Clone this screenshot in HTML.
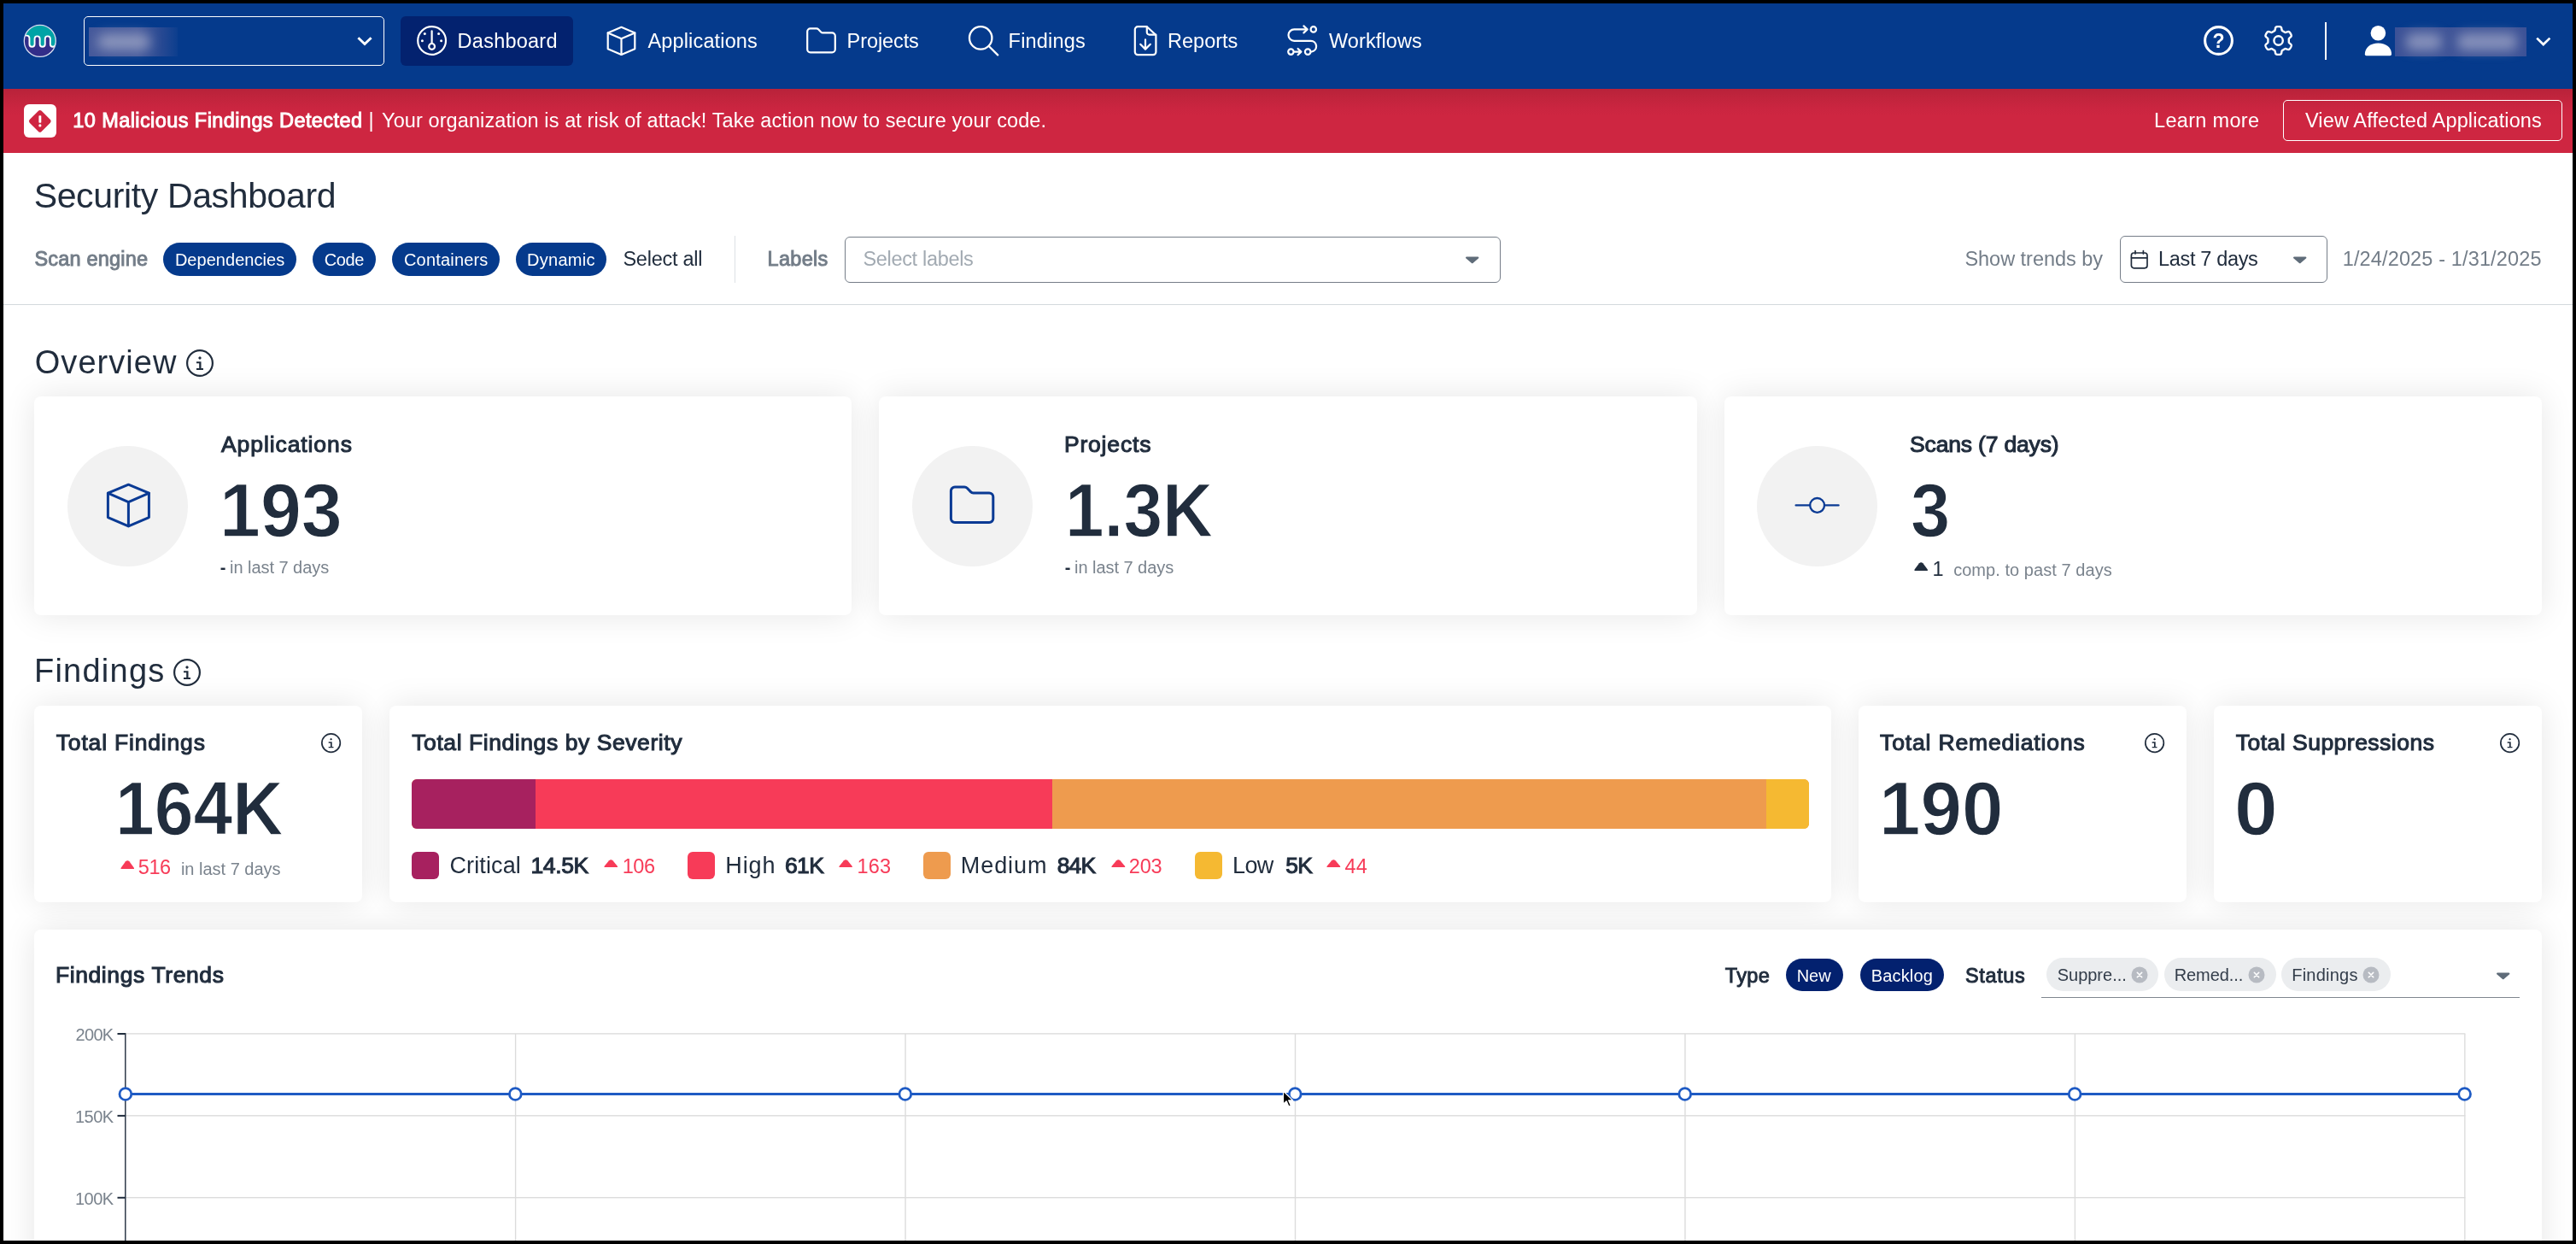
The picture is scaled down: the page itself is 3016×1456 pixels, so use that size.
<!DOCTYPE html>
<html lang="en"><head><meta charset="utf-8"><title>Security Dashboard</title>
<style>
html,body{margin:0;padding:0;background:#000;}
body{width:3016px;height:1456px;overflow:hidden;position:relative;font-family:"Liberation Sans",sans-serif;color:#212d3d;}
#app{position:absolute;left:4px;top:4px;width:3008px;height:1448px;background:#fff;overflow:hidden;}
#w{position:absolute;left:-4px;top:-4px;width:3016px;height:1456px;will-change:transform;}
.t{position:absolute;white-space:nowrap;}
.card{background:#fff;border-radius:8px;box-shadow:0 0 38px rgba(0,0,0,0.10);}
.w{color:#fff;}
</style></head><body><div id="app"><div id="w">
<div class="" style="position:absolute;left:4px;top:4px;width:3008px;height:100px;background:#053a8c;"></div>
<svg style="position:absolute;left:27px;top:28px;" width="40" height="40" viewBox="0 0 40 40">
<defs><clipPath id="lg"><circle cx="19.8" cy="19.9" r="18.4"/></clipPath></defs>
<circle cx="19.8" cy="19.9" r="18.4" fill="#322d89"/>
<g clip-path="url(#lg)">
<path d="M0 13.6 H4.4 a3.05 3.05 0 0 1 3.05 3.05 V23.65 a3.05 3.05 0 0 0 6.1 0 V17.45 a3.05 3.05 0 0 1 6.1 0 V23.65 a3.05 3.05 0 0 0 6.1 0 V17.45 a3.05 3.05 0 0 1 6.1 0 V23.65 a3.05 3.05 0 0 0 6.1 0 H40 V0 H0Z" fill="#00a3a6"/>
<path d="M0 13.6 H4.4 a3.05 3.05 0 0 1 3.05 3.05 V23.65 a3.05 3.05 0 0 0 6.1 0 V17.45 a3.05 3.05 0 0 1 6.1 0 V23.65 a3.05 3.05 0 0 0 6.1 0 V17.45 a3.05 3.05 0 0 1 6.1 0 V23.65 a3.05 3.05 0 0 0 6.1 0 H40" fill="none" stroke="#fff" stroke-width="1.9"/>
</g>
<circle cx="19.8" cy="19.9" r="18.5" fill="none" stroke="#d9def0" stroke-width="1.3"/>
</svg>
<div class="" style="position:absolute;left:98px;top:19px;width:352px;height:58px;box-sizing:border-box;border:1px solid #fff;border-radius:5px;"></div>
<div class="" style="position:absolute;left:104px;top:32px;width:104px;height:34px;background:linear-gradient(90deg,#45599b,#4a5d9d 55%,#2a4a93 80%,#0c3e8e);"></div>
<div class="" style="position:absolute;left:114px;top:40px;width:62px;height:18px;background:#8d97bd;filter:blur(7px);border-radius:9px;"></div>
<svg style="position:absolute;left:416px;top:40px;" width="22" height="16" viewBox="0 0 22 16"><path d="M3.4 4.2 L11 11.6 L18.6 4.2" fill="none" stroke="#fff" stroke-width="2.9" stroke-linejoin="miter"/></svg>
<div class="" style="position:absolute;left:469px;top:19px;width:202px;height:58px;background:#03226f;border-radius:6px;"></div>
<svg style="position:absolute;left:486px;top:28px;" width="40" height="40" viewBox="0 0 40 40"><g fill="none" stroke="#fff" stroke-width="2.2" stroke-linecap="round">
<circle cx="19.6" cy="19.5" r="16.4"/><path d="M19.6 8.4V22.6"/><circle cx="19.6" cy="26.4" r="3.4"/></g>
<g fill="#fff"><circle cx="11.3" cy="11.4" r="1.5"/><circle cx="27.6" cy="11.4" r="1.5"/><circle cx="8.4" cy="19.8" r="1.5"/><circle cx="30.6" cy="19.8" r="1.5"/></g></svg>
<div class="t " style="left:535.62px;top:35px;font-size:23.5px;line-height:26px;letter-spacing:0.242px;color:#fff;">Dashboard</div>
<svg style="position:absolute;left:708px;top:28px;" width="40" height="40" viewBox="0 0 40 40"><g fill="none" stroke="#fff" stroke-width="2.2" stroke-linejoin="round" stroke-linecap="round">
<path d="M19.5 3.8 L35.3 10.4 V29.2 L19.5 35.9 L3.7 29.2 V10.4 Z"/><path d="M3.7 10.4 L19.5 17.2 L35.3 10.4 M19.5 17.2 V35.9"/></g></svg>
<div class="t " style="left:758.50px;top:35px;font-size:23.5px;line-height:26px;letter-spacing:0.145px;color:#fff;">Applications</div>
<svg style="position:absolute;left:942px;top:28px;" width="40" height="40" viewBox="0 0 40 40"><path d="M3.2 9 a3.6 3.6 0 0 1 3.6 -3.6 h7.2 a3 3 0 0 1 2.1 .9 l3.1 3.2 a3 3 0 0 0 2.1 .9 h10.9 a3.6 3.6 0 0 1 3.6 3.6 v15.8 a3.6 3.6 0 0 1 -3.6 3.6 h-25.4 a3.6 3.6 0 0 1 -3.6 -3.6 Z" fill="none" stroke="#fff" stroke-width="2.2" stroke-linejoin="round"/></svg>
<div class="t " style="left:991.62px;top:35px;font-size:23.5px;line-height:26px;letter-spacing:-0.099px;color:#fff;">Projects</div>
<svg style="position:absolute;left:1132px;top:28px;" width="40" height="40" viewBox="0 0 40 40"><g fill="none" stroke="#fff" stroke-width="2.3" stroke-linecap="round"><circle cx="16.2" cy="16.4" r="13.2"/><path d="M26 26.2 L36.2 36.4"/></g></svg>
<div class="t " style="left:1180.62px;top:35px;font-size:23.5px;line-height:26px;letter-spacing:0.196px;color:#fff;">Findings</div>
<svg style="position:absolute;left:1324px;top:28px;" width="36" height="40" viewBox="0 0 36 40"><g fill="none" stroke="#fff" stroke-width="2.2" stroke-linejoin="round" stroke-linecap="round">
<path d="M8.2 3.2 h10.6 L29.4 13 v19.8 a3.4 3.4 0 0 1 -3.4 3.4 h-17.8 a3.4 3.4 0 0 1 -3.4 -3.4 v-26.2 a3.4 3.4 0 0 1 3.4 -3.4 Z"/>
<path d="M18.8 3.4 v6.4 a2.8 2.8 0 0 0 2.8 2.8 h7.6"/>
<path d="M17 18.4 V29.4 M11.2 23.8 L17 29.6 L22.8 23.8"/></g></svg>
<div class="t " style="left:1367.12px;top:35px;font-size:23.5px;line-height:26px;letter-spacing:-0.018px;color:#fff;">Reports</div>
<svg style="position:absolute;left:1505px;top:28px;" width="40" height="40" viewBox="0 0 40 40"><g fill="none" stroke="#fff" stroke-width="2.2" stroke-linecap="round" stroke-linejoin="round">
<circle cx="32.8" cy="6.4" r="3.2"/>
<path d="M25.2 6.4 H10.2 a6.7 6.7 0 0 0 0 13.4 H29.8 a6.4 6.4 0 0 1 1 12.7"/>
<path d="M21.4 2.4 L25.6 6.4 L21.4 10.4"/>
<circle cx="26.2" cy="32.6" r="3.3"/>
<circle cx="6.4" cy="32.6" r="3.2"/>
<path d="M10.6 32.6 H18 M14.6 29 L18.4 32.6 L14.6 36.2"/></g></svg>
<div class="t " style="left:1555.94px;top:35px;font-size:23.5px;line-height:26px;letter-spacing:0.120px;color:#fff;">Workflows</div>
<svg style="position:absolute;left:2578px;top:28px;" width="40" height="40" viewBox="0 0 40 40"><circle cx="19.5" cy="19.5" r="15.9" fill="none" stroke="#fff" stroke-width="3.1"/>
<text x="19.5" y="28.2" text-anchor="middle" font-family="Liberation Sans, sans-serif" font-weight="700" font-size="23" fill="#fff">?</text></svg>
<svg style="position:absolute;left:2648px;top:28px;" width="40" height="40" viewBox="0 0 40 40"><g fill="none" stroke="#fff" stroke-width="2.4" stroke-linejoin="round"><path d="M31.80 19.50 L31.80 19.82 L31.79 20.14 L31.78 20.46 L31.77 20.78 L31.78 21.10 L31.82 21.43 L31.93 21.79 L32.20 22.18 L32.71 22.65 L33.41 23.20 L34.10 23.79 L34.54 24.36 L34.74 24.86 L34.75 25.32 L34.68 25.74 L34.55 26.15 L34.39 26.55 L34.21 26.94 L34.01 27.32 L33.80 27.70 L33.58 28.07 L33.35 28.43 L33.10 28.78 L32.84 29.12 L32.55 29.43 L32.21 29.72 L31.81 29.93 L31.28 30.01 L30.57 29.91 L29.71 29.61 L28.88 29.28 L28.22 29.08 L27.75 29.04 L27.38 29.11 L27.08 29.24 L26.79 29.40 L26.52 29.57 L26.25 29.74 L25.98 29.90 L25.70 30.07 L25.42 30.22 L25.14 30.38 L24.86 30.53 L24.58 30.68 L24.30 30.85 L24.03 31.05 L23.79 31.32 L23.58 31.76 L23.43 32.43 L23.30 33.31 L23.13 34.20 L22.87 34.87 L22.53 35.29 L22.14 35.53 L21.73 35.68 L21.31 35.77 L20.89 35.83 L20.46 35.87 L20.03 35.89 L19.60 35.90 L19.17 35.89 L18.74 35.87 L18.31 35.83 L17.89 35.77 L17.47 35.68 L17.06 35.53 L16.67 35.29 L16.33 34.87 L16.07 34.20 L15.90 33.31 L15.77 32.43 L15.62 31.76 L15.41 31.32 L15.17 31.05 L14.90 30.85 L14.62 30.68 L14.34 30.53 L14.06 30.38 L13.78 30.22 L13.50 30.07 L13.22 29.90 L12.95 29.74 L12.68 29.57 L12.41 29.40 L12.12 29.24 L11.82 29.11 L11.45 29.04 L10.98 29.08 L10.32 29.28 L9.49 29.61 L8.63 29.91 L7.92 30.01 L7.39 29.93 L6.99 29.72 L6.65 29.43 L6.36 29.12 L6.10 28.78 L5.85 28.43 L5.62 28.07 L5.40 27.70 L5.19 27.32 L4.99 26.94 L4.81 26.55 L4.65 26.15 L4.52 25.74 L4.45 25.32 L4.46 24.86 L4.66 24.36 L5.10 23.79 L5.79 23.20 L6.49 22.65 L7.00 22.18 L7.27 21.79 L7.38 21.43 L7.42 21.10 L7.43 20.78 L7.42 20.46 L7.41 20.14 L7.40 19.82 L7.40 19.50 L7.40 19.18 L7.41 18.86 L7.42 18.54 L7.43 18.22 L7.42 17.90 L7.38 17.57 L7.27 17.21 L7.00 16.82 L6.49 16.35 L5.79 15.80 L5.10 15.21 L4.66 14.64 L4.46 14.14 L4.45 13.68 L4.52 13.26 L4.65 12.85 L4.81 12.45 L4.99 12.06 L5.19 11.68 L5.40 11.30 L5.62 10.93 L5.85 10.57 L6.10 10.22 L6.36 9.88 L6.65 9.57 L6.99 9.28 L7.39 9.07 L7.92 8.99 L8.63 9.09 L9.49 9.39 L10.32 9.72 L10.98 9.92 L11.45 9.96 L11.82 9.89 L12.12 9.76 L12.41 9.60 L12.68 9.43 L12.95 9.26 L13.22 9.10 L13.50 8.93 L13.78 8.78 L14.06 8.62 L14.34 8.47 L14.62 8.32 L14.90 8.15 L15.17 7.95 L15.41 7.68 L15.62 7.24 L15.77 6.57 L15.90 5.69 L16.07 4.80 L16.33 4.13 L16.67 3.71 L17.06 3.47 L17.47 3.32 L17.89 3.23 L18.31 3.17 L18.74 3.13 L19.17 3.11 L19.60 3.10 L20.03 3.11 L20.46 3.13 L20.89 3.17 L21.31 3.23 L21.73 3.32 L22.14 3.47 L22.53 3.71 L22.87 4.13 L23.13 4.80 L23.30 5.69 L23.43 6.57 L23.58 7.24 L23.79 7.68 L24.03 7.95 L24.30 8.15 L24.58 8.32 L24.86 8.47 L25.14 8.62 L25.42 8.78 L25.70 8.93 L25.98 9.10 L26.25 9.26 L26.52 9.43 L26.79 9.60 L27.08 9.76 L27.38 9.89 L27.75 9.96 L28.22 9.92 L28.88 9.72 L29.71 9.39 L30.57 9.09 L31.28 8.99 L31.81 9.07 L32.21 9.28 L32.55 9.57 L32.84 9.88 L33.10 10.22 L33.35 10.57 L33.58 10.93 L33.80 11.30 L34.01 11.68 L34.21 12.06 L34.39 12.45 L34.55 12.85 L34.68 13.26 L34.75 13.68 L34.74 14.14 L34.54 14.64 L34.10 15.21 L33.41 15.80 L32.71 16.35 L32.20 16.82 L31.93 17.21 L31.82 17.57 L31.78 17.90 L31.77 18.22 L31.78 18.54 L31.79 18.86 L31.80 19.18Z"/><circle cx="19.6" cy="19.5" r="5.2"/></g></svg>
<div class="" style="position:absolute;left:2722px;top:26px;width:2.400000000000091px;height:44px;background:#fff;"></div>
<svg style="position:absolute;left:2766px;top:28px;" width="36" height="40" viewBox="0 0 36 40"><circle cx="18.4" cy="10.8" r="8.8" fill="#fff"/><path d="M2.8 35.4 C2.8 27.5 9.5 22.4 18.4 22.4 S34 27.5 34 35.4 a1.8 1.8 0 0 1 -1.8 1.8 H4.6 a1.8 1.8 0 0 1 -1.8 -1.8Z" fill="#fff"/></svg>
<div class="" style="position:absolute;left:2804px;top:32px;width:154px;height:34px;background:linear-gradient(90deg,#3b5197,#405598 10%,#405598 90%,#3b5197);"></div>
<div class="" style="position:absolute;left:2817px;top:39px;width:42px;height:20px;background:#8590ba;filter:blur(6.5px);border-radius:9px;"></div>
<div class="" style="position:absolute;left:2877px;top:39px;width:70px;height:20px;background:#8590ba;filter:blur(6.5px);border-radius:9px;"></div>
<svg style="position:absolute;left:2966px;top:40px;" width="24" height="16" viewBox="0 0 24 16"><path d="M4.2 4.6 L11.8 12 L19.4 4.6" fill="none" stroke="#fff" stroke-width="2.7" stroke-linejoin="miter"/></svg>
<div class="" style="position:absolute;left:4px;top:104px;width:3008px;height:74.5px;background:linear-gradient(180deg,#b8223a 0,#c0243c 9px,#ca2540 22px,#ce2641 32px,#ce2641 100%);"></div>
<div class="" style="position:absolute;left:28px;top:122px;width:38px;height:39px;background:#fff;border-radius:6px;"></div>
<svg style="position:absolute;left:28px;top:122px;" width="38" height="39" viewBox="0 0 38 39"><path d="M17 7.8 a2.6 2.6 0 0 1 3.6 0 l10.3 10.3 a2.6 2.6 0 0 1 0 3.6 l-10.3 10.3 a2.6 2.6 0 0 1 -3.6 0 l-10.3 -10.3 a2.6 2.6 0 0 1 0 -3.6Z" fill="#cf2541"/>
<rect x="17.4" y="13.2" width="2.9" height="8.6" rx=".8" fill="#fff"/><circle cx="18.85" cy="24.9" r="1.6" fill="#fff"/></svg>
<div class="t " style="left:85.24px;top:128px;font-size:23.5px;line-height:26px;letter-spacing:0.421px;-webkit-text-stroke:0.94px #fff;color:#fff;">10 Malicious Findings Detected</div>
<div class="t " style="left:431.44px;top:128px;font-size:23.5px;line-height:26px;color:#fff;">|</div>
<div class="t " style="left:447.03px;top:128px;font-size:23.5px;line-height:26px;letter-spacing:0.098px;color:#fff;">Your organization is at risk of attack! Take action now to secure your code.</div>
<div class="t " style="left:2522.12px;top:128px;font-size:23.5px;line-height:26px;letter-spacing:0.304px;color:#fff;">Learn more</div>
<div class="" style="position:absolute;left:2673px;top:117px;width:327px;height:48px;box-sizing:border-box;border:1px solid #fff;border-radius:5px;"></div>
<div class="t " style="left:2698.94px;top:128px;font-size:23.5px;line-height:26px;letter-spacing:0.136px;color:#fff;">View Affected Applications</div>
<div class="t " style="left:39.66px;top:206px;font-size:41px;line-height:46px;letter-spacing:-0.363px;">Security Dashboard</div>
<div class="t " style="left:40.44px;top:290px;font-size:23.5px;line-height:26px;letter-spacing:0.190px;-webkit-text-stroke:0.94px #737d88;color:#737d88;">Scan engine</div>
<div class="" style="position:absolute;left:191px;top:284px;width:156px;height:39px;background:#053a8c;border-radius:19.5px;"></div>
<div class="t " style="left:204.90px;top:293px;font-size:20px;line-height:22px;letter-spacing:0.036px;color:#fff;">Dependencies</div>
<div class="" style="position:absolute;left:366px;top:284px;width:74px;height:39px;background:#053a8c;border-radius:19.5px;"></div>
<div class="t " style="left:379.80px;top:293px;font-size:20px;line-height:22px;letter-spacing:-0.383px;color:#fff;">Code</div>
<div class="" style="position:absolute;left:459px;top:284px;width:126px;height:39px;background:#053a8c;border-radius:19.5px;"></div>
<div class="t " style="left:473.00px;top:293px;font-size:20px;line-height:22px;letter-spacing:0.178px;color:#fff;">Containers</div>
<div class="" style="position:absolute;left:604px;top:284px;width:106px;height:39px;background:#053a8c;border-radius:19.5px;"></div>
<div class="t " style="left:617.00px;top:293px;font-size:20px;line-height:22px;letter-spacing:0.283px;color:#fff;">Dynamic</div>
<div class="t " style="left:729.44px;top:290px;font-size:23.5px;line-height:26px;letter-spacing:-0.252px;">Select all</div>
<div class="" style="position:absolute;left:860px;top:276px;width:1.2000000000000455px;height:55px;background:#dde1e5;"></div>
<div class="t " style="left:898.62px;top:290px;font-size:23.5px;line-height:26px;letter-spacing:0.287px;-webkit-text-stroke:0.94px #737d88;color:#737d88;">Labels</div>
<div class="" style="position:absolute;left:989px;top:277px;width:768px;height:54px;box-sizing:border-box;border:1px solid #757d88;border-radius:6px;"></div>
<div class="t " style="left:1010.44px;top:290px;font-size:23.5px;line-height:26px;letter-spacing:-0.322px;color:#a2aab2;">Select labels</div>
<svg style="position:absolute;left:1715px;top:299px;" width="18" height="11" viewBox="0 0 18 11"><path d="M2 1.6 H15.4 a1 1 0 0 1 .75 1.65 L9.5 8.9 a1 1 0 0 1 -1.5 0 L1.25 3.25 A1 1 0 0 1 2 1.6Z" fill="#5f6c79"/></svg>
<div class="t " style="left:2300.44px;top:290px;font-size:23.5px;line-height:26px;letter-spacing:-0.032px;color:#737d88;">Show trends by</div>
<div class="" style="position:absolute;left:2482px;top:276px;width:243px;height:55px;box-sizing:border-box;border:1px solid #757d88;border-radius:6px;"></div>
<svg style="position:absolute;left:2493px;top:292px;" width="24" height="24" viewBox="0 0 24 24"><g fill="none" stroke="#212d3d" stroke-width="1.7" stroke-linecap="round" stroke-linejoin="round">
<rect x="2.4" y="4" width="18.6" height="17.8" rx="3"/><path d="M2.6 9.8 H20.8 M7 1.6 V5 M16.4 1.6 V5"/></g></svg>
<div class="t " style="left:2527.12px;top:290px;font-size:23.5px;line-height:26px;letter-spacing:-0.350px;">Last 7 days</div>
<svg style="position:absolute;left:2684px;top:299px;" width="18" height="11" viewBox="0 0 18 11"><path d="M2 1.6 H15.4 a1 1 0 0 1 .75 1.65 L9.5 8.9 a1 1 0 0 1 -1.5 0 L1.25 3.25 A1 1 0 0 1 2 1.6Z" fill="#5f6c79"/></svg>
<div class="t " style="left:2742.74px;top:290px;font-size:23.5px;line-height:26px;letter-spacing:0.138px;color:#737d88;">1/24/2025 - 1/31/2025</div>
<div class="" style="position:absolute;left:4px;top:355.5px;width:3008px;height:1.6999999999999886px;background:#d3d9dd;"></div>
<div class="t " style="left:40.79px;top:403px;font-size:38px;line-height:42px;letter-spacing:1.036px;">Overview</div>
<svg style="position:absolute;left:217px;top:408px;" width="34" height="34" viewBox="0 0 34 34"><circle cx="17" cy="17" r="14.9" fill="none" stroke="#212d3d" stroke-width="2.2"/><g fill="#212d3d" transform="translate(17 17) scale(1.0)"><path d="M0 -8.1 L2 -6.1 L0 -4.1 L-2 -6.1Z"/><path d="M-4 -1.7 H1.5 V6 H4 V7.9 H-4 V6 H-0.8 V0.2 H-4Z"/></g></svg>
<div class="card" style="position:absolute;left:40px;top:464px;width:957px;height:256px;"></div>
<div class="" style="position:absolute;left:79.0px;top:521.5px;width:141.0px;height:141.0px;background:#f2f2f2;border-radius:50%;"></div>
<svg style="position:absolute;left:119.5px;top:562px;" width="60" height="60" viewBox="0 0 60 60"><g fill="none" stroke="#0a3a94" stroke-width="3" stroke-linejoin="round" stroke-linecap="round">
<path d="M30.4 5.2 L54.4 15.2 V43.6 L30.4 53.8 L6.4 43.6 V15.2 Z"/><path d="M6.4 15.2 L30.4 25.6 L54.4 15.2 M30.4 25.6 V53.8"/></g></svg>
<div class="t " style="left:259.00px;top:505px;font-size:26.5px;line-height:30px;letter-spacing:0.911px;-webkit-text-stroke:1.06px #212d3d;">Applications</div>
<div class="t " style="left:257.11px;top:552px;font-size:84px;line-height:94px;font-weight:700;-webkit-text-stroke:1.2px #fff;transform:scale(1.0258,1.0680);transform-origin:0 76px;">193</div>
<div class="t " style="left:257.65px;top:653px;font-size:20px;line-height:22px;font-weight:700;">-</div>
<div class="t " style="left:269.00px;top:653px;font-size:20px;line-height:22px;letter-spacing:-0.042px;color:#7a838d;">in last 7 days</div>
<div class="card" style="position:absolute;left:1029.3px;top:464px;width:957.5px;height:256px;"></div>
<div class="" style="position:absolute;left:1067.8999999999999px;top:521.5px;width:141.0px;height:141.0px;background:#f2f2f2;border-radius:50%;"></div>
<svg style="position:absolute;left:1108.3999999999999px;top:562px;" width="60" height="60" viewBox="0 0 60 60"><path d="M5.4 12.6 a4.6 4.6 0 0 1 4.6 -4.6 h11.2 a4.4 4.4 0 0 1 3.1 1.3 l4.2 4.3 a4.4 4.4 0 0 0 3.1 1.3 h18.6 a4.6 4.6 0 0 1 4.6 4.6 v25.4 a4.6 4.6 0 0 1 -4.6 4.6 h-40.2 a4.6 4.6 0 0 1 -4.6 -4.6 Z" fill="none" stroke="#0a3a94" stroke-width="3" stroke-linejoin="round"/></svg>
<div class="t " style="left:1245.88px;top:505px;font-size:26.5px;line-height:30px;letter-spacing:0.831px;-webkit-text-stroke:1.06px #212d3d;">Projects</div>
<div class="t " style="left:1246.87px;top:552px;font-size:84px;line-height:94px;font-weight:700;-webkit-text-stroke:1.2px #fff;transform:scale(0.9763,1.0680);transform-origin:0 76px;">1.3K</div>
<div class="t " style="left:1246.65px;top:653px;font-size:20px;line-height:22px;font-weight:700;">-</div>
<div class="t " style="left:1258.00px;top:653px;font-size:20px;line-height:22px;letter-spacing:-0.042px;color:#7a838d;">in last 7 days</div>
<div class="card" style="position:absolute;left:2019px;top:464px;width:957px;height:256px;"></div>
<div class="" style="position:absolute;left:2057.0px;top:521.5px;width:141.0px;height:141.0px;background:#f2f2f2;border-radius:50%;"></div>
<svg style="position:absolute;left:2097.5px;top:562px;" width="60" height="60" viewBox="0 0 60 60"><g fill="none" stroke="#0a3a94" stroke-width="2.3" stroke-linecap="round"><circle cx="29.6" cy="29.4" r="8.4"/><path d="M4.6 29.4 H21 M38.2 29.4 H54.6"/></g></svg>
<div class="t " style="left:2236.11px;top:505px;font-size:26.5px;line-height:30px;letter-spacing:-0.175px;-webkit-text-stroke:1.06px #212d3d;">Scans (7 days)</div>
<div class="t " style="left:2237.13px;top:552px;font-size:84px;line-height:94px;font-weight:700;-webkit-text-stroke:1.2px #fff;transform:scale(0.9881,1.0680);transform-origin:0 76px;">3</div>
<svg style="position:absolute;left:2241px;top:657.5px;" width="16.40000000000009" height="10.200000000000045" viewBox="0 0 16.40000000000009 10.200000000000045"><path d="M6.000000000000045 1.2 Q8.200000000000045 -0.9 10.400000000000045 1.2 L15.800000000000091 8.600000000000046 Q16.40000000000009 10.200000000000045 14.800000000000091 10.200000000000045 H1.6 Q0 10.200000000000045 0.6 8.600000000000046Z" fill="#212d3d"/></svg>
<div class="t " style="left:2262.44px;top:653px;font-size:23.5px;line-height:26px;">1</div>
<div class="t " style="left:2287.15px;top:656px;font-size:20px;line-height:22px;letter-spacing:0.053px;color:#7a838d;">comp. to past 7 days</div>
<div class="t " style="left:39.96px;top:764px;font-size:38px;line-height:42px;letter-spacing:1.247px;">Findings</div>
<svg style="position:absolute;left:202px;top:770px;" width="34" height="34" viewBox="0 0 34 34"><circle cx="17" cy="17" r="14.9" fill="none" stroke="#212d3d" stroke-width="2.2"/><g fill="#212d3d" transform="translate(17 17) scale(1.0)"><path d="M0 -8.1 L2 -6.1 L0 -4.1 L-2 -6.1Z"/><path d="M-4 -1.7 H1.5 V6 H4 V7.9 H-4 V6 H-0.8 V0.2 H-4Z"/></g></svg>
<div class="card" style="position:absolute;left:40px;top:826px;width:384px;height:230px;"></div>
<div class="t " style="left:65.77px;top:854px;font-size:26.5px;line-height:30px;letter-spacing:0.819px;-webkit-text-stroke:1.06px #212d3d;">Total Findings</div>
<svg style="position:absolute;left:374.9px;top:856.7px;" width="25.2" height="25.2" viewBox="0 0 25.2 25.2"><circle cx="12.6" cy="12.6" r="10.75" fill="none" stroke="#212d3d" stroke-width="1.7"/><g fill="#212d3d" transform="translate(12.6 12.6) scale(0.725)"><path d="M0 -8.1 L2 -6.1 L0 -4.1 L-2 -6.1Z"/><path d="M-4 -1.7 H1.5 V6 H4 V7.9 H-4 V6 H-0.8 V0.2 H-4Z"/></g></svg>
<div class="t " style="left:134.85px;top:901px;font-size:84px;line-height:94px;font-weight:700;-webkit-text-stroke:1.2px #fff;transform:scale(0.9801,1.0680);transform-origin:0 76px;">164K</div>
<svg style="position:absolute;left:140.5px;top:1006.7px;" width="16.5" height="10.299999999999955" viewBox="0 0 16.5 10.299999999999955"><path d="M6.05 1.2 Q8.25 -0.9 10.45 1.2 L15.9 8.699999999999955 Q16.5 10.299999999999955 14.9 10.299999999999955 H1.6 Q0 10.299999999999955 0.6 8.699999999999955Z" fill="#f73b58"/></svg>
<div class="t " style="left:161.86px;top:1002px;font-size:23.5px;line-height:26px;letter-spacing:-0.524px;color:#f73b58;">516</div>
<div class="t " style="left:211.90px;top:1006px;font-size:20px;line-height:22px;color:#7a838d;">in last 7 days</div>
<div class="card" style="position:absolute;left:456px;top:826px;width:1688px;height:230px;"></div>
<div class="t " style="left:482.27px;top:854px;font-size:26.5px;line-height:30px;letter-spacing:0.570px;-webkit-text-stroke:1.06px #212d3d;">Total Findings by Severity</div>
<div class="" style="position:absolute;left:482px;top:912px;width:1636px;height:58px;border-radius:6px;overflow:hidden;background:#ee9b4e;"><div style="position:absolute;left:0;top:0;height:58px;width:144.8px;background:#a7215f"></div><div style="position:absolute;left:144.8px;top:0;height:58px;width:605.2px;background:#f73b58"></div><div style="position:absolute;left:1585.7px;top:0;height:58px;width:60px;background:#f5b932"></div></div>
<div class="" style="position:absolute;left:482px;top:997px;width:32px;height:32px;background:#a7215f;border-radius:6px;"></div>
<div class="t " style="left:526.45px;top:998px;font-size:27px;line-height:30px;letter-spacing:0.117px;">Critical</div>
<div class="t " style="left:621.41px;top:998px;font-size:26.5px;line-height:30px;letter-spacing:-0.361px;-webkit-text-stroke:1.06px #212d3d;">14.5K</div>
<svg style="position:absolute;left:706.5px;top:1005.6px;" width="16.5" height="9.399999999999977" viewBox="0 0 16.5 9.399999999999977"><path d="M6.05 1.2 Q8.25 -0.9 10.45 1.2 L15.9 7.799999999999978 Q16.5 9.399999999999977 14.9 9.399999999999977 H1.6 Q0 9.399999999999977 0.6 7.799999999999978Z" fill="#f73b58"/></svg>
<div class="t " style="left:728.64px;top:1001px;font-size:23.5px;line-height:26px;letter-spacing:-0.412px;color:#f73b58;">106</div>
<div class="" style="position:absolute;left:805px;top:997px;width:32px;height:32px;background:#f73b58;border-radius:6px;"></div>
<div class="t " style="left:849.34px;top:998px;font-size:27px;line-height:30px;letter-spacing:0.854px;">High</div>
<div class="t " style="left:918.97px;top:998px;font-size:26.5px;line-height:30px;letter-spacing:-0.590px;-webkit-text-stroke:1.06px #212d3d;">61K</div>
<svg style="position:absolute;left:982px;top:1005.6px;" width="16.299999999999955" height="9.399999999999977" viewBox="0 0 16.299999999999955 9.399999999999977"><path d="M5.949999999999977 1.2 Q8.149999999999977 -0.9 10.349999999999977 1.2 L15.699999999999955 7.799999999999978 Q16.299999999999955 9.399999999999977 14.699999999999955 9.399999999999977 H1.6 Q0 9.399999999999977 0.6 7.799999999999978Z" fill="#f73b58"/></svg>
<div class="t " style="left:1003.44px;top:1001px;font-size:23.5px;line-height:26px;letter-spacing:0.187px;color:#f73b58;">163</div>
<div class="" style="position:absolute;left:1081px;top:997px;width:32px;height:32px;background:#ee9b4e;border-radius:6px;"></div>
<div class="t " style="left:1124.84px;top:998px;font-size:27px;line-height:30px;letter-spacing:0.906px;">Medium</div>
<div class="t " style="left:1237.67px;top:998px;font-size:26.5px;line-height:30px;letter-spacing:-0.789px;-webkit-text-stroke:1.06px #212d3d;">84K</div>
<svg style="position:absolute;left:1301.3px;top:1005.6px;" width="16.700000000000045" height="9.399999999999977" viewBox="0 0 16.700000000000045 9.399999999999977"><path d="M6.150000000000023 1.2 Q8.350000000000023 -0.9 10.550000000000022 1.2 L16.100000000000044 7.799999999999978 Q16.700000000000045 9.399999999999977 15.100000000000046 9.399999999999977 H1.6 Q0 9.399999999999977 0.6 7.799999999999978Z" fill="#f73b58"/></svg>
<div class="t " style="left:1321.83px;top:1001px;font-size:23.5px;line-height:26px;letter-spacing:-0.206px;color:#f73b58;">203</div>
<div class="" style="position:absolute;left:1399px;top:997px;width:32px;height:32px;background:#f5b932;border-radius:6px;"></div>
<div class="t " style="left:1443.04px;top:998px;font-size:27px;line-height:30px;letter-spacing:-0.626px;">Low</div>
<div class="t " style="left:1505.14px;top:998px;font-size:26.5px;line-height:30px;letter-spacing:-0.671px;-webkit-text-stroke:1.06px #212d3d;">5K</div>
<svg style="position:absolute;left:1553.3px;top:1005.6px;" width="16.700000000000045" height="9.399999999999977" viewBox="0 0 16.700000000000045 9.399999999999977"><path d="M6.150000000000023 1.2 Q8.350000000000023 -0.9 10.550000000000022 1.2 L16.100000000000044 7.799999999999978 Q16.700000000000045 9.399999999999977 15.100000000000046 9.399999999999977 H1.6 Q0 9.399999999999977 0.6 7.799999999999978Z" fill="#f73b58"/></svg>
<div class="t " style="left:1574.47px;top:1001px;font-size:23.5px;line-height:26px;letter-spacing:0.090px;color:#f73b58;">44</div>
<div class="card" style="position:absolute;left:2176px;top:826px;width:384px;height:230px;"></div>
<div class="t " style="left:2201.07px;top:854px;font-size:26.5px;line-height:30px;letter-spacing:0.840px;-webkit-text-stroke:1.06px #212d3d;">Total Remediations</div>
<svg style="position:absolute;left:2510.4px;top:856.7px;" width="25.2" height="25.2" viewBox="0 0 25.2 25.2"><circle cx="12.6" cy="12.6" r="10.75" fill="none" stroke="#212d3d" stroke-width="1.7"/><g fill="#212d3d" transform="translate(12.6 12.6) scale(0.725)"><path d="M0 -8.1 L2 -6.1 L0 -4.1 L-2 -6.1Z"/><path d="M-4 -1.7 H1.5 V6 H4 V7.9 H-4 V6 H-0.8 V0.2 H-4Z"/></g></svg>
<div class="t " style="left:2200.05px;top:901px;font-size:84px;line-height:94px;font-weight:700;-webkit-text-stroke:1.2px #fff;transform:scale(1.0374,1.0680);transform-origin:0 76px;">190</div>
<div class="card" style="position:absolute;left:2592px;top:826px;width:384px;height:230px;"></div>
<div class="t " style="left:2617.77px;top:854px;font-size:26.5px;line-height:30px;letter-spacing:0.484px;-webkit-text-stroke:1.06px #212d3d;">Total Suppressions</div>
<svg style="position:absolute;left:2926.4px;top:856.7px;" width="25.2" height="25.2" viewBox="0 0 25.2 25.2"><circle cx="12.6" cy="12.6" r="10.75" fill="none" stroke="#212d3d" stroke-width="1.7"/><g fill="#212d3d" transform="translate(12.6 12.6) scale(0.725)"><path d="M0 -8.1 L2 -6.1 L0 -4.1 L-2 -6.1Z"/><path d="M-4 -1.7 H1.5 V6 H4 V7.9 H-4 V6 H-0.8 V0.2 H-4Z"/></g></svg>
<div class="t " style="left:2616.09px;top:901px;font-size:84px;line-height:94px;font-weight:700;-webkit-text-stroke:1.2px #fff;transform:scale(1.0838,1.0680);transform-origin:0 76px;">0</div>
<div class="card" style="position:absolute;left:40px;top:1088px;width:2936px;height:412px;"></div>
<div class="t " style="left:64.88px;top:1126px;font-size:26.5px;line-height:30px;letter-spacing:0.607px;-webkit-text-stroke:1.06px #212d3d;">Findings Trends</div>
<div class="t " style="left:2019.83px;top:1129px;font-size:23.5px;line-height:26px;letter-spacing:0.344px;-webkit-text-stroke:0.94px #212d3d;">Type</div>
<div class="" style="position:absolute;left:2090.7px;top:1122px;width:67.0px;height:38px;background:#03216f;border-radius:19.0px;"></div>
<div class="t " style="left:2103.70px;top:1131px;font-size:20px;line-height:22px;letter-spacing:-0.025px;color:#fff;">New</div>
<div class="" style="position:absolute;left:2177.6px;top:1122px;width:98.40000000000009px;height:38px;background:#03216f;border-radius:19.0px;"></div>
<div class="t " style="left:2190.70px;top:1131px;font-size:20px;line-height:22px;letter-spacing:0.167px;color:#fff;">Backlog</div>
<div class="t " style="left:2300.94px;top:1129px;font-size:23.5px;line-height:26px;letter-spacing:0.652px;-webkit-text-stroke:0.94px #212d3d;">Status</div>
<div class="" style="position:absolute;left:2396px;top:1121px;width:131px;height:39px;background:#ebedef;border-radius:19.5px;"></div>
<div class="t " style="left:2408.70px;top:1130px;font-size:20px;line-height:22px;letter-spacing:-0.006px;color:#323c49;">Suppre...</div>
<svg style="position:absolute;left:2494.5px;top:1131px;" width="20" height="20" viewBox="0 0 20 20"><circle cx="10" cy="10" r="9.5" fill="#b7bbc2"/><path d="M7.3 7.3 L12.7 12.7 M12.7 7.3 L7.3 12.7" stroke="#fff" stroke-width="1.6" stroke-linecap="round"/></svg>
<div class="" style="position:absolute;left:2534px;top:1121px;width:130.69999999999982px;height:39px;background:#ebedef;border-radius:19.5px;"></div>
<div class="t " style="left:2545.70px;top:1130px;font-size:20px;line-height:22px;letter-spacing:-0.079px;color:#323c49;">Remed...</div>
<svg style="position:absolute;left:2632.3px;top:1131px;" width="20" height="20" viewBox="0 0 20 20"><circle cx="10" cy="10" r="9.5" fill="#b7bbc2"/><path d="M7.3 7.3 L12.7 12.7 M12.7 7.3 L7.3 12.7" stroke="#fff" stroke-width="1.6" stroke-linecap="round"/></svg>
<div class="" style="position:absolute;left:2671px;top:1121px;width:128px;height:39px;background:#ebedef;border-radius:19.5px;"></div>
<div class="t " style="left:2683.20px;top:1130px;font-size:20px;line-height:22px;letter-spacing:0.243px;color:#323c49;">Findings</div>
<svg style="position:absolute;left:2766.4px;top:1131px;" width="20" height="20" viewBox="0 0 20 20"><circle cx="10" cy="10" r="9.5" fill="#b7bbc2"/><path d="M7.3 7.3 L12.7 12.7 M12.7 7.3 L7.3 12.7" stroke="#fff" stroke-width="1.6" stroke-linecap="round"/></svg>
<svg style="position:absolute;left:2922px;top:1137px;" width="18" height="11" viewBox="0 0 18 11"><path d="M2 1.6 H15.4 a1 1 0 0 1 .75 1.65 L9.5 8.9 a1 1 0 0 1 -1.5 0 L1.25 3.25 A1 1 0 0 1 2 1.6Z" fill="#5f6c79"/></svg>
<div class="" style="position:absolute;left:2390px;top:1167px;width:560px;height:1px;background:#7f868e;"></div>
<svg style="position:absolute;left:0px;top:1088px;" width="3016" height="368" viewBox="0 0 3016 368"><rect x="147" y="121.20" width="2739.40" height="1.4" fill="#dcdcdc"/><rect x="147" y="217.10" width="2739.40" height="1.4" fill="#dcdcdc"/><rect x="147" y="313.00" width="2739.40" height="1.4" fill="#dcdcdc"/><rect x="602.90" y="122" width="1.4" height="400" fill="#dcdcdc"/><rect x="1059.35" y="122" width="1.4" height="400" fill="#dcdcdc"/><rect x="1515.80" y="122" width="1.4" height="400" fill="#dcdcdc"/><rect x="1972.25" y="122" width="1.4" height="400" fill="#dcdcdc"/><rect x="2428.70" y="122" width="1.4" height="400" fill="#dcdcdc"/><rect x="2885.15" y="122" width="1.4" height="400" fill="#dcdcdc"/><rect x="146.1" y="121.20000000000005" width="1.4" height="400" fill="#212d3d"/><rect x="137.5" y="121.00" width="9.5" height="2" fill="#212d3d"/><rect x="137.5" y="216.90" width="9.5" height="2" fill="#212d3d"/><rect x="137.5" y="312.80" width="9.5" height="2" fill="#212d3d"/><path d="M146.9 192.5 H2885.60" stroke="#1f5bc4" stroke-width="3" fill="none"/><circle cx="146.90" cy="192.5" r="6.9" fill="#fff" stroke="#1f5bc4" stroke-width="2.8"/><circle cx="603.35" cy="192.5" r="6.9" fill="#fff" stroke="#1f5bc4" stroke-width="2.8"/><circle cx="1059.80" cy="192.5" r="6.9" fill="#fff" stroke="#1f5bc4" stroke-width="2.8"/><circle cx="1516.25" cy="192.5" r="6.9" fill="#fff" stroke="#1f5bc4" stroke-width="2.8"/><circle cx="1972.70" cy="192.5" r="6.9" fill="#fff" stroke="#1f5bc4" stroke-width="2.8"/><circle cx="2429.15" cy="192.5" r="6.9" fill="#fff" stroke="#1f5bc4" stroke-width="2.8"/><circle cx="2885.60" cy="192.5" r="6.9" fill="#fff" stroke="#1f5bc4" stroke-width="2.8"/></svg>
<div class="t " style="left:88.50px;top:1200px;font-size:20px;line-height:22px;letter-spacing:-0.667px;color:#7a838d;">200K</div>
<div class="t " style="left:88.00px;top:1296px;font-size:20px;line-height:22px;letter-spacing:-0.500px;color:#7a838d;">150K</div>
<div class="t " style="left:88.00px;top:1392px;font-size:20px;line-height:22px;letter-spacing:-0.500px;color:#7a838d;">100K</div>
<svg style="position:absolute;left:1500px;top:1275px;" width="16" height="24" viewBox="0 0 16 24"><path d="M2.5 2 V17.2 L6.2 13.8 L8.9 20 L11.4 18.9 L8.7 12.9 H13.6 Z" fill="#000" stroke="#fff" stroke-width="1.2" stroke-linejoin="round"/></svg>
</div></div></body></html>
